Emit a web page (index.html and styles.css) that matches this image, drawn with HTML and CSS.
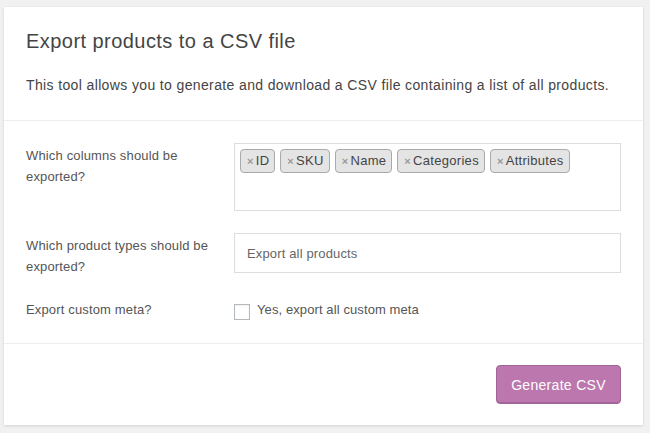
FILE: index.html
```html
<!DOCTYPE html>
<html>
<head>
	<title>Export Products</title>
	<link rel="stylesheet" href="styles.css">
</head>
<body>

	<form class="export_form">
		<header class="export_header">
			<h2>Export products to a CSV file</h2>
			<p>This tool allows you to generate and download a CSV file containing a list of all products.</p>
		</header>

		<section class="export_options">
			<div class="option_row">
				<label class="option_label">Which columns should be exported?</label>
				<div class="tag_box">
					<span class="tag"><span class="tag_remove">×</span>ID</span>
					<span class="tag"><span class="tag_remove">×</span>SKU</span>
					<span class="tag"><span class="tag_remove">×</span>Name</span>
					<span class="tag"><span class="tag_remove">×</span>Categories</span>
					<span class="tag"><span class="tag_remove">×</span>Attributes</span>
				</div>
			</div>

			<div class="option_row">
				<label class="option_label">Which product types should be exported?</label>
				<div class="select_box">Export all products</div>
			</div>

			<div class="option_row meta_row">
				<label class="option_label">Export custom meta?</label>
				<label class="check_label">
					<input type="checkbox" class="check">
					Yes, export all custom meta
				</label>
			</div>
		</section>

		<div class="export_actions">
			<button type="button" class="generate_btn">Generate CSV</button>
		</div>
	</form>

</body>
</html>
```

FILE: styles.css
```css
body {
	margin: 0;
	padding: 7px 7px 8px 4px;
	background-color: #f1f1f1;
	font-family: "Liberation Sans", Arial, sans-serif;
	color: #555;
}

.export_form {
	background-color: white;
	box-shadow: 0 1px 3px rgba(0, 0, 0, 0.13);
}

.export_header {
	padding: 22px 22px 24px;
	border-bottom: 1px solid #eee;
}

.export_header h2 {
	margin: 0;
	font-size: 20px;
	line-height: 24px;
	font-weight: normal;
	letter-spacing: 0.45px;
	color: #444;
}

.export_header p {
	margin: 22px 0 0;
	font-size: 14px;
	line-height: 21px;
	letter-spacing: 0.37px;
	color: #444;
}

.export_options {
	padding: 22px 22px 23px;
	border-bottom: 1px solid #eee;
	display: flex;
	flex-direction: column;
	gap: 22px;
}

.option_row {
	display: grid;
	grid-template-columns: 208px 1fr;
	align-items: start;
}

.meta_row {
	padding-top: 2px;
}

/* labels may run a little past the field below them */
.option_label {
	padding: 2px 18px 0 0;
	margin-bottom: -4px;
	font-size: 13px;
	line-height: 21px;
	letter-spacing: 0.15px;
	color: #555;
}

.tag_box {
	height: 68px;
	box-sizing: border-box;
	border: 1px solid #ddd;
	padding: 5px;
	display: flex;
	flex-wrap: wrap;
	align-content: flex-start;
	gap: 5px;
}

.tag {
	border: 1px solid #aaa;
	border-radius: 4px;
	background-color: #e4e4e4;
	padding: 0 5px 0 6px;
	font-size: 13px;
	line-height: 21px;
	letter-spacing: 0.3px;
	color: #444;
}

.tag_remove {
	color: #999;
	font-size: 11px;
	font-weight: bold;
	margin-right: 2px;
}

.select_box {
	height: 40px;
	box-sizing: border-box;
	border: 1px solid #ddd;
	padding: 0 12px;
	display: flex;
	align-items: center;
	font-size: 13px;
	letter-spacing: 0.15px;
	color: #666;
}

.check_label {
	display: flex;
	align-items: flex-start;
	gap: 7px;
	padding-top: 2px;
	font-size: 13px;
	line-height: 21px;
	letter-spacing: 0.1px;
	color: #555;
}

.check {
	appearance: none;
	-webkit-appearance: none;
	box-sizing: border-box;
	width: 16px;
	height: 16px;
	margin: 5px 0 0;
	border: 1px solid #b4b9be;
	background-color: white;
	box-shadow: inset 0 1px 2px rgba(0, 0, 0, 0.07);
}

.export_actions {
	padding: 21px 22px;
	display: flex;
	justify-content: flex-end;
}

.generate_btn {
	width: 125px;
	height: 39px;
	border: 1px solid #a36597;
	border-radius: 4px;
	background-color: #bb77ae;
	box-shadow: inset 0 -1px 0 #a36597;
	color: white;
	font-family: "Liberation Sans", Arial, sans-serif;
	font-size: 14px;
	letter-spacing: 0.3px;
}
```
